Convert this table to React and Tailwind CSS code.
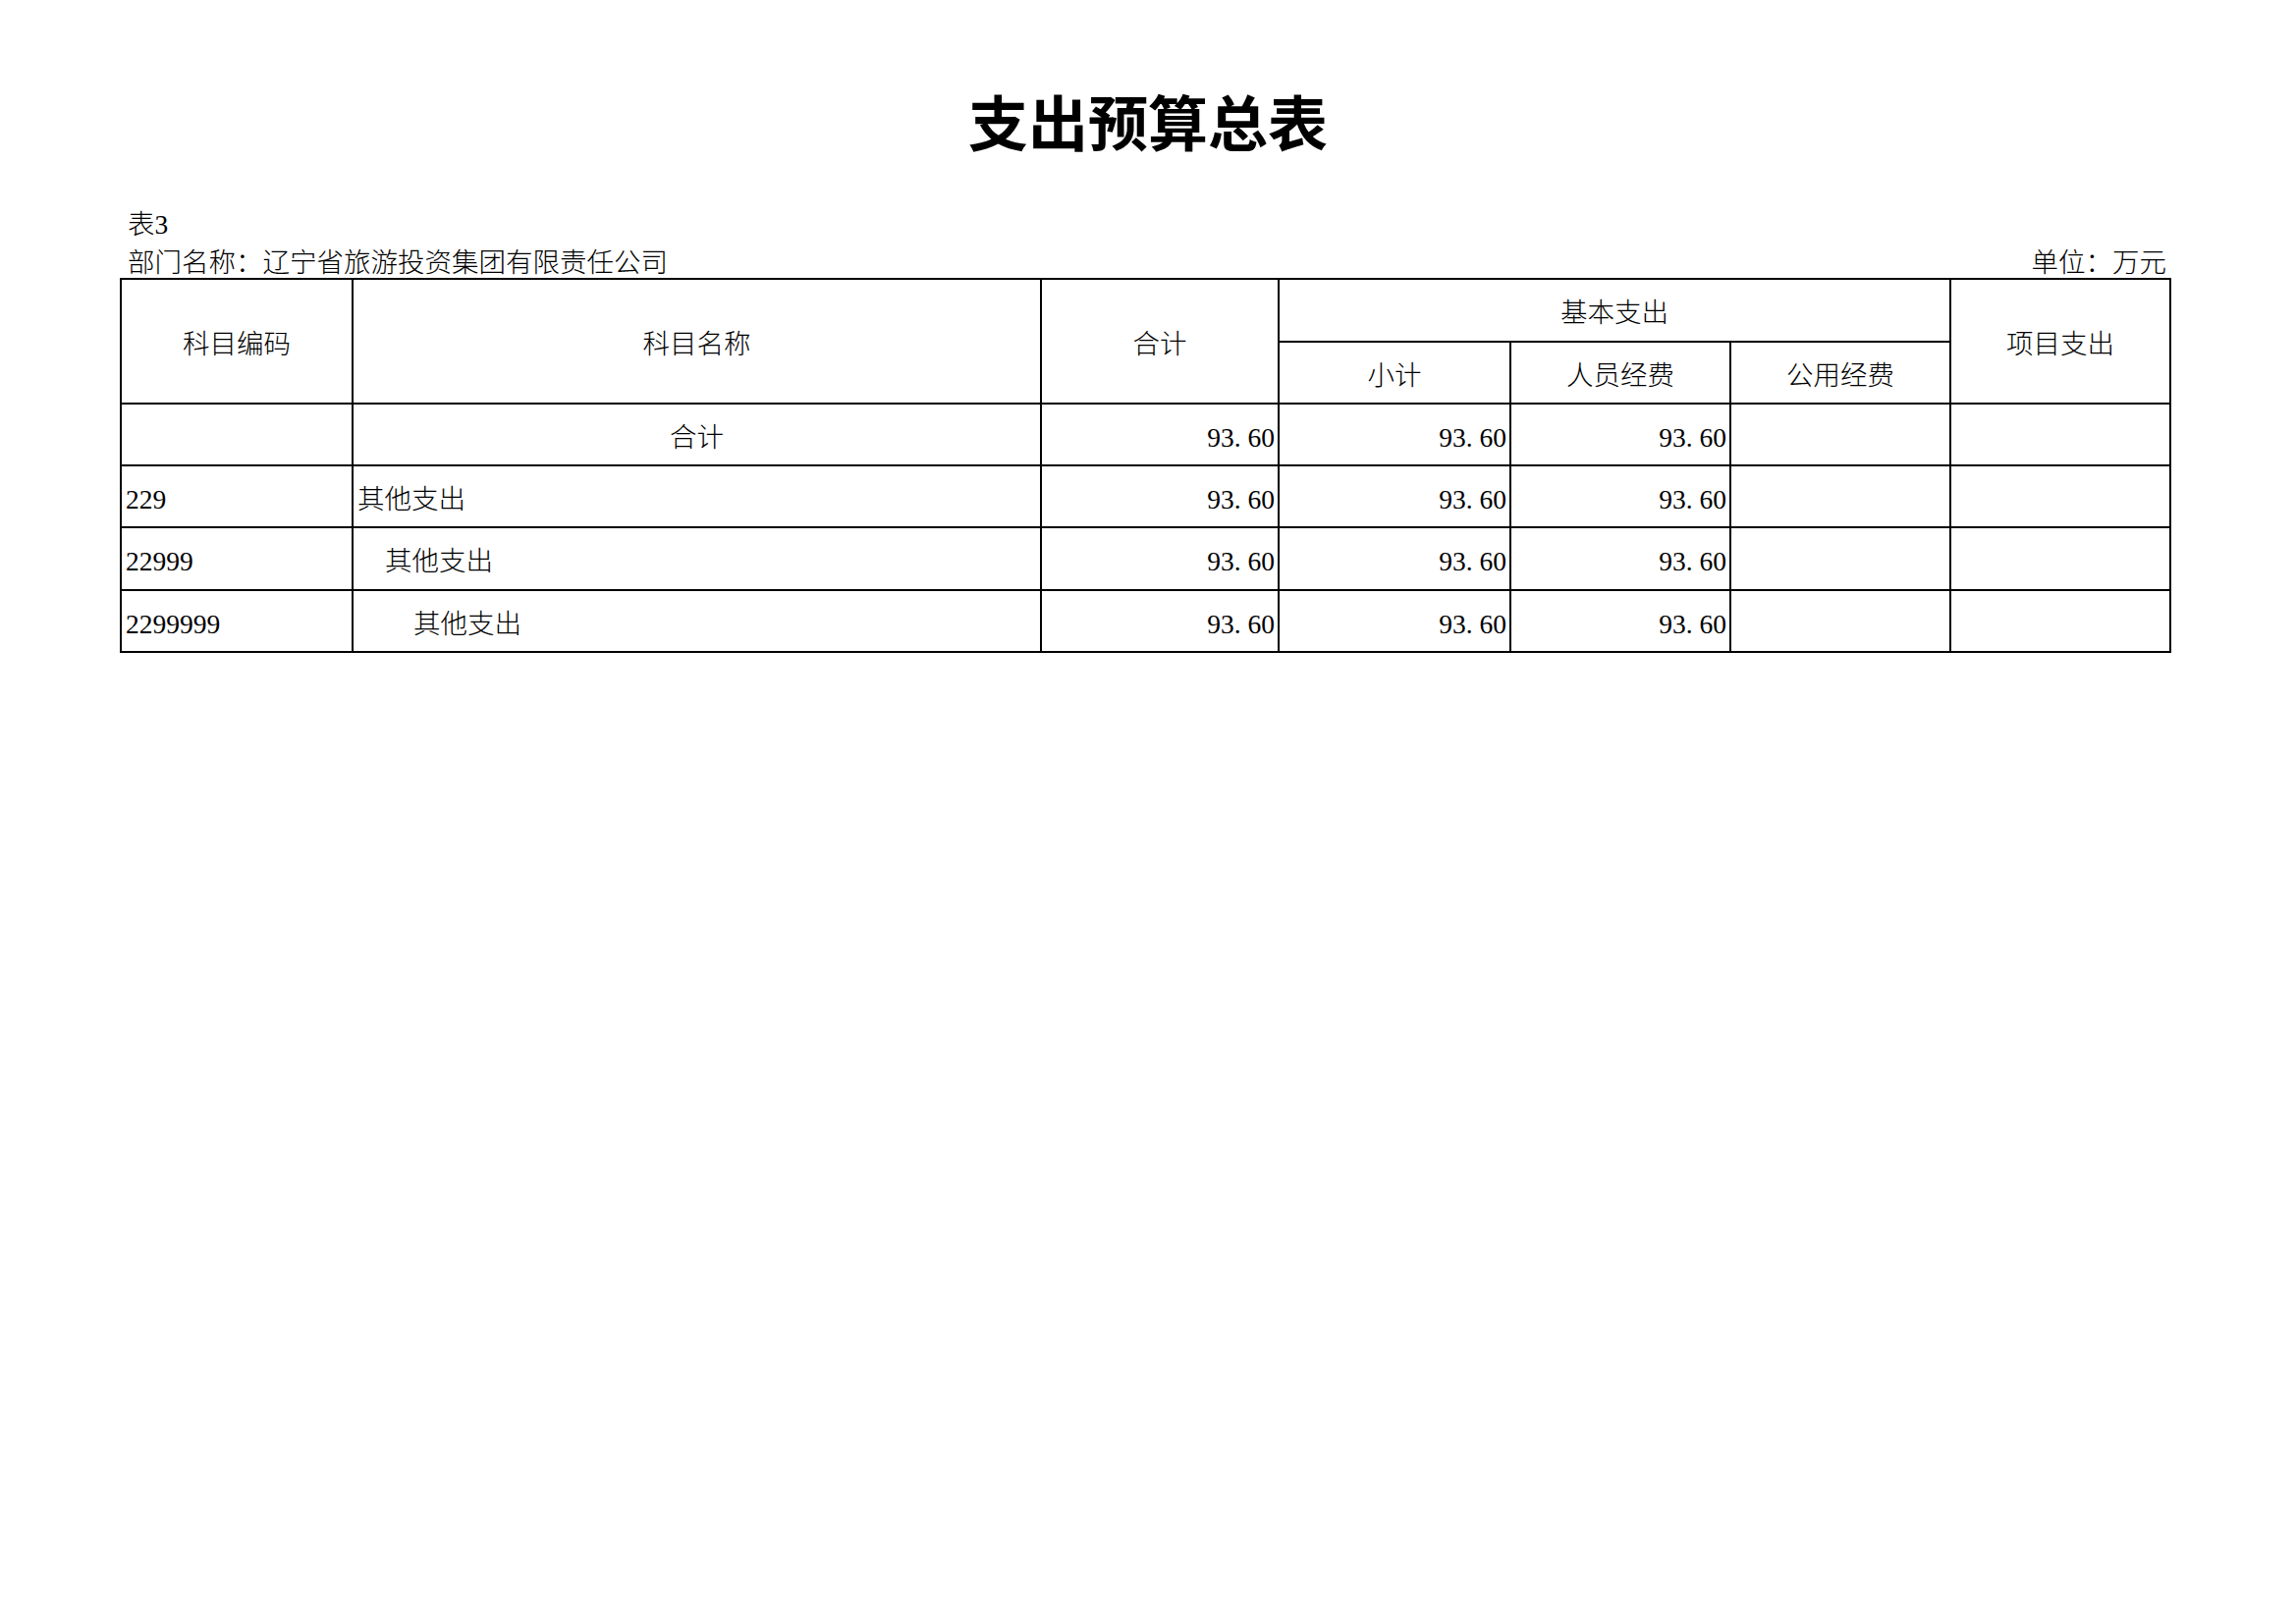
import React from "react";

const FONT = { fontFamily: '"Liberation Serif", "Noto Sans CJK SC", serif' };

function Num({ v }) {
  const [a, b] = v.split(".");
  return (
    <span className="whitespace-nowrap">
      {a}
      <span className="inline-block w-[0.5em]">.</span>
      {b}
    </span>
  );
}

function Cell({ className = "", children }) {
  return <div className={"bg-white flex items-center pt-[6px] " + className}>{children}</div>;
}

const rows = [
  { code: "", name: "合计", center: true, indent: "", total: "93.60", sub: "93.60", staff: "93.60" },
  { code: "229", name: "其他支出", indent: "pl-[4px]", total: "93.60", sub: "93.60", staff: "93.60" },
  { code: "22999", name: "其他支出", indent: "pl-[32px]", total: "93.60", sub: "93.60", staff: "93.60" },
  { code: "2299999", name: "其他支出", indent: "pl-[61px]", total: "93.60", sub: "93.60", staff: "93.60" },
];

export default function App() {
  return (
    <div className="w-[2338px] h-[1653px] bg-white text-black overflow-hidden font-light" style={FONT}>
      <div className="pt-[98px] text-center text-[61px] leading-[61px] font-bold">支出预算总表</div>
      <div className="ml-[130px] mt-[56px] text-[27.5px] leading-[28px]">表3</div>
      <div className="ml-[130px] w-[2076px] mt-[11px] flex justify-between text-[27.5px] leading-[28px]">
        <span>部门名称：辽宁省旅游投资集团有限责任公司</span>
        <span>单位：万元</span>
      </div>
      <div
        className="ml-[122px] mt-[1px] w-[2089px] bg-black p-[2px] gap-[2px] grid grid-cols-[234px_699px_240px_234px_222px_222px_222px] grid-rows-[62px_61px_61px_61px_62px_61px] text-[27.5px] leading-[28px]"
      >
        <Cell className="row-span-2 justify-center">科目编码</Cell>
        <Cell className="row-span-2 justify-center">科目名称</Cell>
        <Cell className="row-span-2 justify-center">合计</Cell>
        <Cell className="col-span-3 justify-center">基本支出</Cell>
        <Cell className="row-span-2 justify-center">项目支出</Cell>
        <Cell className="justify-center">小计</Cell>
        <Cell className="justify-center">人员经费</Cell>
        <Cell className="justify-center">公用经费</Cell>
        {rows.map((r, i) => (
          <React.Fragment key={i}>
            <Cell className="pl-[4px]">{r.code}</Cell>
            <Cell className={r.center ? "justify-center" : r.indent}>{r.name}</Cell>
            <Cell className="justify-end pr-[3px]">
              <Num v={r.total} />
            </Cell>
            <Cell className="justify-end pr-[3px]">
              <Num v={r.sub} />
            </Cell>
            <Cell className="justify-end pr-[3px]">
              <Num v={r.staff} />
            </Cell>
            <Cell></Cell>
            <Cell></Cell>
          </React.Fragment>
        ))}
      </div>
    </div>
  );
}
